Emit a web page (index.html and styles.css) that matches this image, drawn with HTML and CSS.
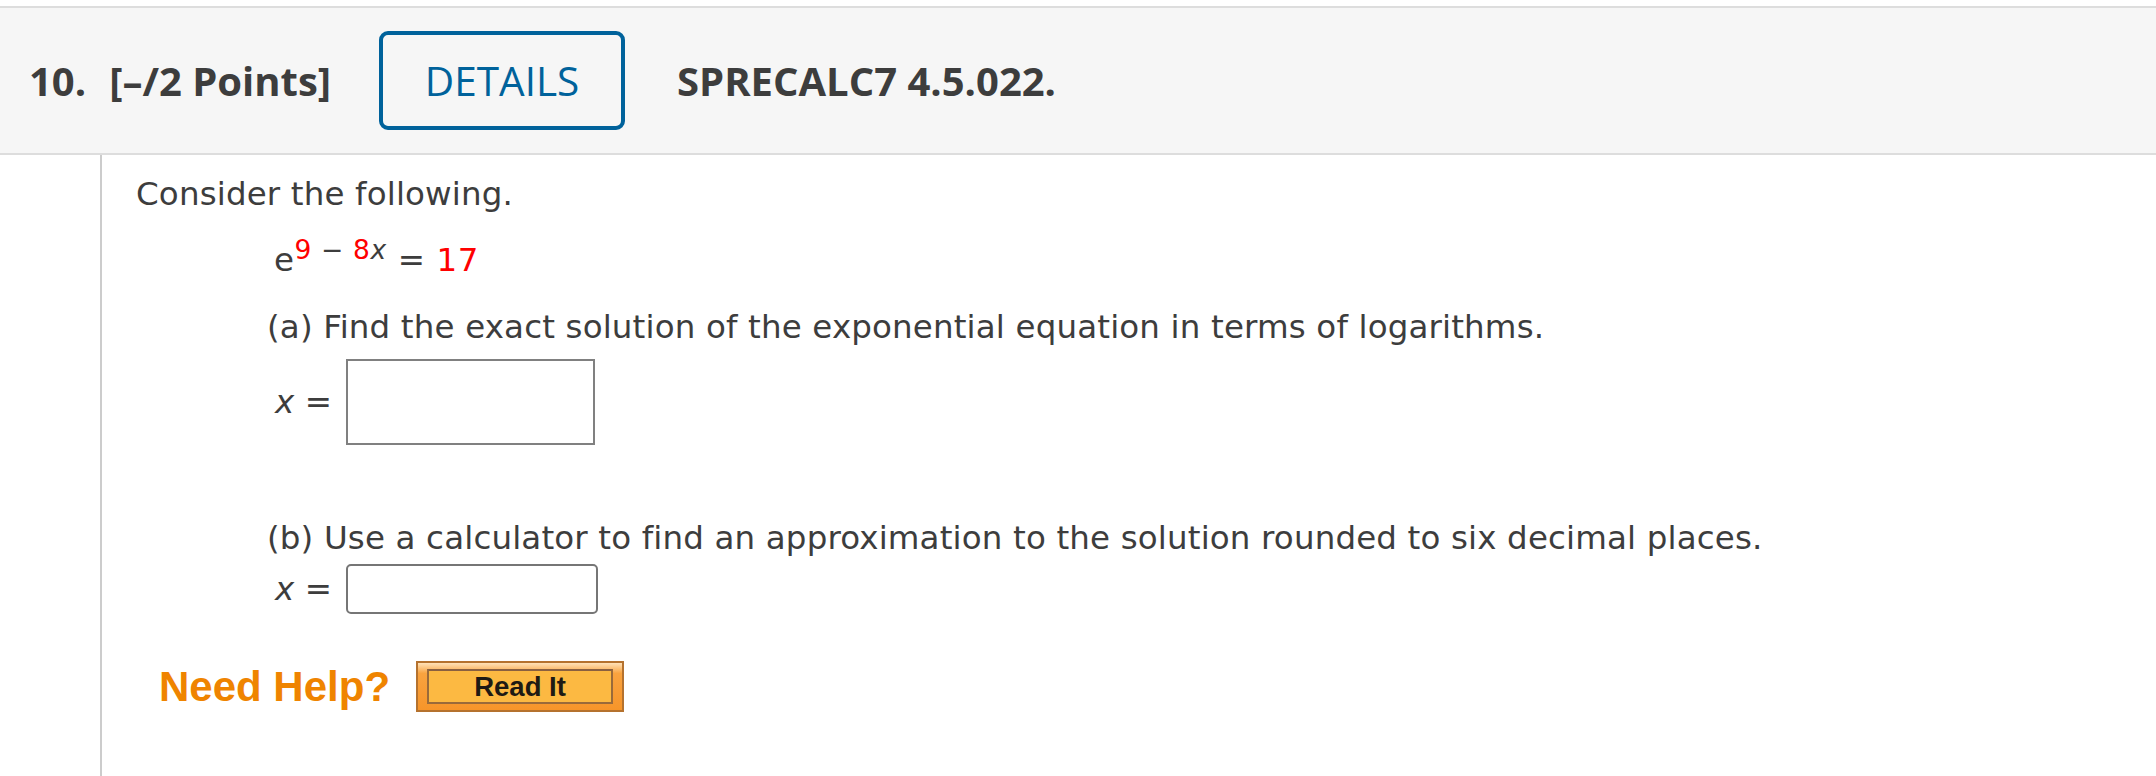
FILE: index.html
```html
<!DOCTYPE html>
<html lang="en">
<head>
<meta charset="utf-8">
<title>Question 10</title>
<link rel="stylesheet" href="styles.css">
</head>
<body>
<div class="page">
  <header class="qhead">
    <span class="qnum">10.</span>
    <span class="qpoints">[–/2 Points]</span>
    <span class="details">DETAILS</span>
    <span class="qcode">SPRECALC7 4.5.022.</span>
  </header>
  <main class="content">
    <p class="intro">Consider the following.</p>
    <div class="indent">
      <p class="eq">e<span class="sup"><span class="red">9</span> − <span class="red">8</span><span class="var">x</span></span> = <span class="red">17</span></p>
      <p class="part part-a">(a) Find the exact solution of the exponential equation in terms of logarithms.</p>
      <div class="answer answer-a">
        <span class="label"><span class="var">x</span> =</span>
        <span class="box box-a"></span>
      </div>
      <p class="part part-b">(b) Use a calculator to find an approximation to the solution rounded to six decimal places.</p>
      <div class="answer answer-b">
        <span class="label"><span class="var">x</span> =</span>
        <span class="box box-b"></span>
      </div>
    </div>
    <div class="help">
      <span class="need">Need Help?</span>
      <span class="readit"><span class="readit-inner">Read It</span></span>
    </div>
  </main>
</div>
</body>
</html>
```

FILE: styles.css
```css
html, body {
  height: 100%;
}
body {
  margin: 0;
  background: #ffffff;
}
.page {
  min-height: 100%;
  box-sizing: border-box;
  padding-top: 6px;
  display: flex;
  flex-direction: column;
}
.qhead {
  display: flex;
  align-items: center;
  height: 145px;
  background: #f6f6f6;
  border-top: 2px solid #dddddd;
  border-bottom: 2px solid #dddddd;
  padding-left: 29px;
  font-family: "Open Sans", "DejaVu Sans", sans-serif;
  font-size: 40px;
  color: #3d3d3d;
}
.qnum {
  font-weight: 700;
}
.qpoints {
  font-weight: 700;
  margin-left: 23px;
}
.details {
  box-sizing: border-box;
  width: 246px;
  height: 99px;
  margin-left: 48px;
  border: 4px solid #00629b;
  border-radius: 9px;
  color: #00629b;
  display: flex;
  align-items: center;
  justify-content: center;
  font-weight: 400;
  font-size: 40.5px;
}
.qcode {
  font-weight: 700;
  margin-left: 52px;
}
.content {
  flex: 1;
  margin-left: 100px;
  border-left: 2px solid #cccccc;
  padding-left: 34px;
  padding-top: 19px;
  font-family: "DejaVu Sans", Verdana, sans-serif;
  font-size: 32.5px;
  letter-spacing: 0.15px;
  color: #3d3d3d;
}
.intro {
  margin: 0;
  line-height: 40px;
}
.indent {
  margin-left: 131px;
}
.eq {
  margin: 26px 0 0 0;
  padding-left: 7px;
  line-height: 40px;
  letter-spacing: 0.6px;
}
.sup {
  font-size: 26.5px;
  vertical-align: 12px;
  line-height: 0;
}
.red {
  color: #ff0000;
}
.var {
  font-style: italic;
}
.part {
  margin: 0;
  line-height: 40px;
}
.part-a {
  margin-top: 27px;
}
.part-b {
  margin-top: 73px;
}
.answer {
  display: flex;
  align-items: center;
}
.answer-a {
  margin-top: 12px;
}
.answer-b {
  margin-top: 6px;
}
.label {
  padding-left: 8px;
  line-height: 40px;
}
.box {
  box-sizing: border-box;
  display: block;
  margin-left: 14px;
  background: #ffffff;
}
.box-a {
  width: 249px;
  height: 86px;
  border: 2px solid #808080;
}
.box-b {
  width: 252px;
  height: 50px;
  border: 2px solid #767676;
  border-radius: 5px;
}
.help {
  display: flex;
  align-items: center;
  margin-top: 47px;
  margin-left: 23px;
}
.need {
  font-family: "Liberation Sans", Arial, sans-serif;
  font-weight: 700;
  font-size: 42px;
  line-height: 42px;
  letter-spacing: 0;
  color: #ef8400;
}
.readit {
  box-sizing: border-box;
  width: 208px;
  height: 51px;
  margin-left: 26px;
  border: 2px solid #b5722e;
  background: linear-gradient(#ffe2b8 0%, #f9a33f 22%, #f7952a 100%);
  padding: 6px 9px;
  display: flex;
}
.readit-inner {
  box-sizing: border-box;
  flex: 1;
  border: 2px solid #9a6a3a;
  border-top-color: #8a6040;
  background: #fcb942;
  display: flex;
  align-items: center;
  justify-content: center;
  font-family: "Liberation Sans", Arial, sans-serif;
  font-weight: 700;
  font-size: 27.5px;
  letter-spacing: 0;
  color: #1e1a14;
}
```
